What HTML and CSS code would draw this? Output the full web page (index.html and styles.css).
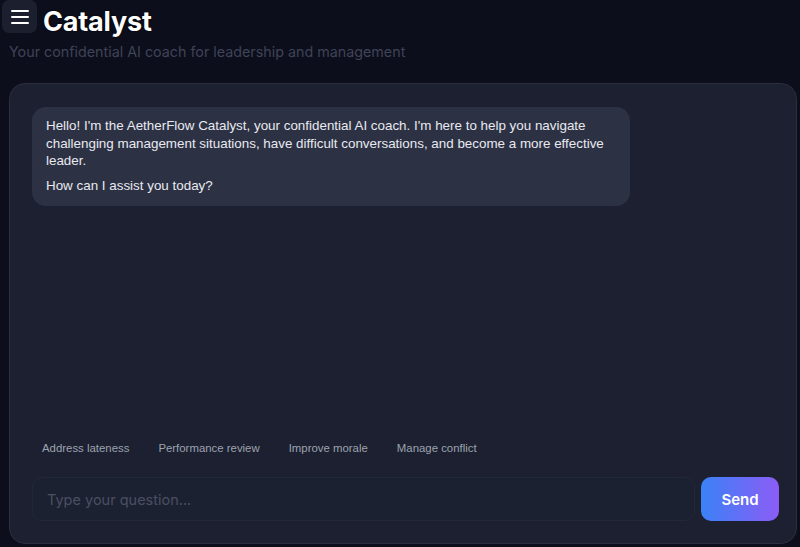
FILE: index.html
```html
<!DOCTYPE html>
<html lang="en">
<head>
<meta charset="utf-8">
<title>Catalyst</title>
<link rel="stylesheet" href="styles.css">
</head>
<body>
<header class="header">
  <div class="title-row">
    <button class="menu-btn" aria-label="Menu">
      <svg width="18" height="16" viewBox="0 0 18 16"><path d="M1 2h16M1 8h16M1 14h16" stroke="#ffffff" stroke-width="2" stroke-linecap="round"/></svg>
    </button>
    <h1 class="title">Catalyst</h1>
  </div>
  <p class="subtitle">Your confidential AI coach for leadership and management</p>
</header>
<main class="chat">
  <div class="messages">
    <div class="bubble">
      <p>Hello! I'm the AetherFlow Catalyst, your confidential AI coach. I'm here to help you navigate challenging management situations, have difficult conversations, and become a more effective leader.</p>
      <p>How can I assist you today?</p>
    </div>
  </div>
  <div class="chips">
    <span class="chip">Address lateness</span>
    <span class="chip">Performance review</span>
    <span class="chip">Improve morale</span>
    <span class="chip">Manage conflict</span>
  </div>
  <form class="composer">
    <input class="input" type="text" placeholder="Type your question...">
    <button class="send" type="button">Send</button>
  </form>
</main>
</body>
</html>
```
FILE: styles.css
```css
* { box-sizing: border-box; }
html, body { height: 100%; }
body {
  margin: 0;
  background: #0c0e1b;
  font-family: Inter, "Liberation Sans", sans-serif;
  color: #e5e7eb;
  overflow: hidden;
}
.header { padding: 0 0 0 2px; }
.title-row { display: flex; align-items: flex-start; gap: 6px; }
.menu-btn {
  width: 35px; height: 33px;
  border: none; border-radius: 7px;
  background: #1c1f2e;
  display: flex; align-items: center; justify-content: center;
  padding: 0; margin: 0;
}
.title {
  margin: 5px 0 0;
  font-size: 27px; font-weight: 700; line-height: 34px;
  color: #ffffff;
  text-shadow: 0 0 2px #000;
  letter-spacing: -0.2px;
}
.subtitle {
  margin: 4px 0 0 7px;
  font-size: 14.3px; line-height: 18px;
  color: #3f4357;
}
.chat {
  margin: 22px 3px 0 9px;
  height: 461px;
  background: #1c2030;
  border: 1px solid #2a2e3e;
  border-radius: 16px;
  display: flex; flex-direction: column;
  padding: 23px 17px 22px 22px;
}
.messages { flex: 1; }
.bubble {
  width: 598px;
  background: #2d3144;
  border-radius: 14px;
  padding: 10px 14px 12px;
  font-family: "Liberation Sans", Arial, sans-serif;
  font-size: 13.4px; line-height: 17.6px;
  color: #e8eaf0;
}
.bubble p { margin: 0; }
.bubble p + p { margin-top: 7px; }
.chips { display: flex; gap: 9px; margin-bottom: 18px; }
.chip {
  padding: 4px 10px;
  font-family: "Liberation Sans", Arial, sans-serif;
  font-size: 11.4px; line-height: 14px;
  color: #9ca3af;
  border-radius: 8px;
}
.composer { display: flex; gap: 6px; margin: 0; }
.input {
  flex: 1; height: 44px;
  background: #1c2131;
  border: 1px solid #22273a;
  border-radius: 10px;
  padding: 0 14px;
  font-family: Inter, "Liberation Sans", sans-serif;
  font-size: 14.5px;
  color: #e5e7eb;
  outline: none;
}
.input::placeholder { color: #4a4f63; }
.send {
  width: 78px; height: 44px;
  border: none; border-radius: 10px;
  background: linear-gradient(90deg, #3b82f6, #8b5cf6);
  color: #fff;
  font-family: Inter, "Liberation Sans", sans-serif;
  font-size: 15px; font-weight: 600;
}
```
